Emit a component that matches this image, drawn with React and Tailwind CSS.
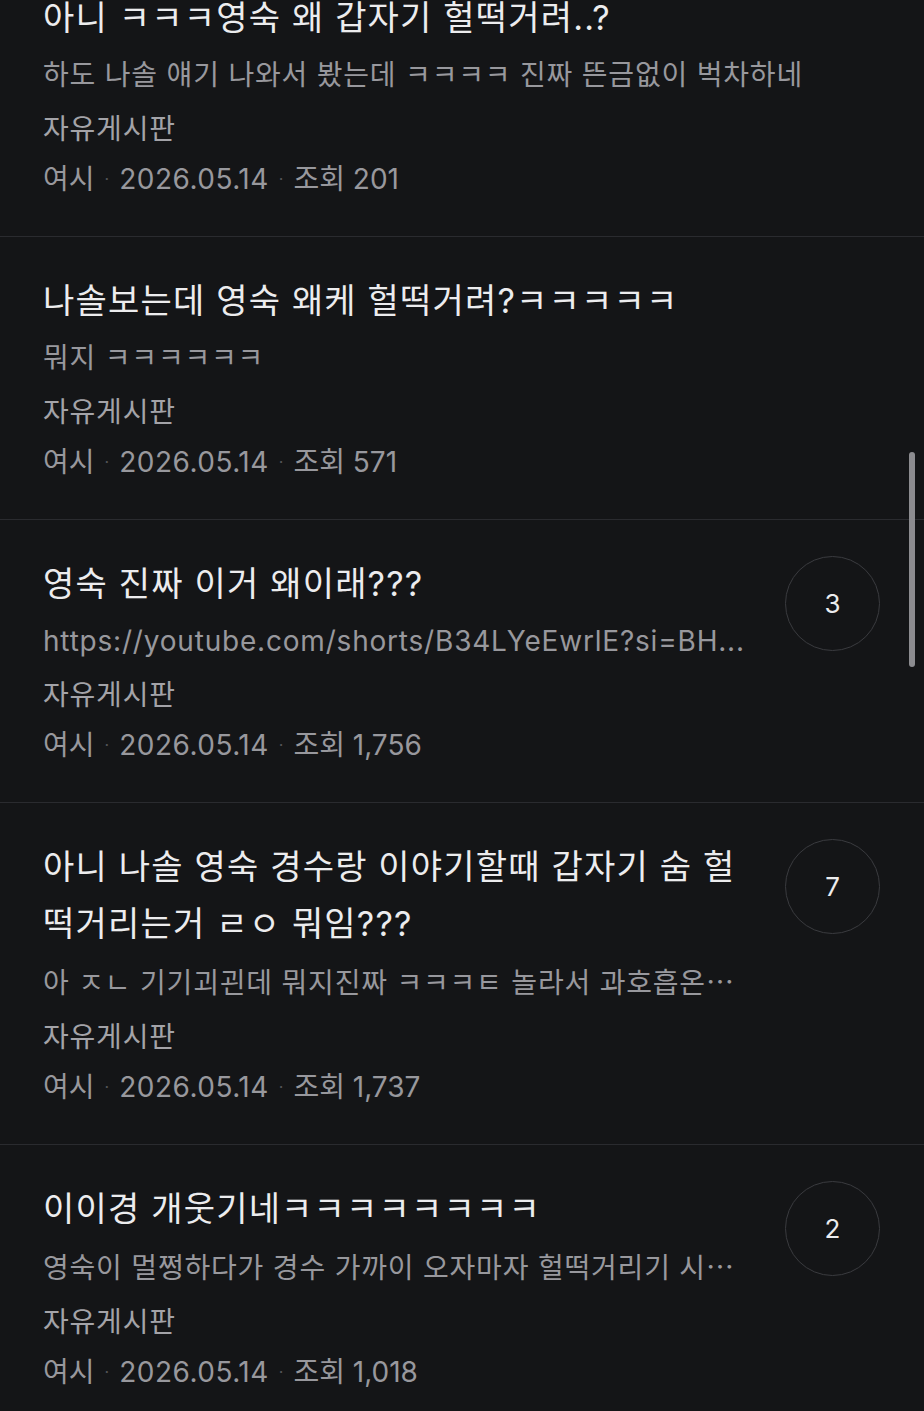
import React from "react";

const posts = [
  {
    id: 1,
    title: "아니 ㅋㅋㅋ영숙 왜 갑자기 헐떡거려..?",
    summary: "하도 나솔 얘기 나와서 봤는데 ㅋㅋㅋㅋ 진짜 뜬금없이 벅차하네",
    views: "201",
    comments: null,
  },
  {
    id: 2,
    title: "나솔보는데 영숙 왜케 헐떡거려?ㅋㅋㅋㅋㅋ",
    summary: "뭐지 ㅋㅋㅋㅋㅋㅋ",
    views: "571",
    comments: null,
  },
  {
    id: 3,
    title: "영숙 진짜 이거 왜이래???",
    summary: "https://youtube.com/shorts/B34LYeEwrlE?si=BH...",
    views: "1,756",
    comments: 3,
  },
  {
    id: 4,
    title: "아니 나솔 영숙 경수랑 이야기할때 갑자기 숨 헐떡거리는거 ㄹㅇ 뭐임???",
    summary: "아 ㅈㄴ 기기괴괸데 뭐지진짜 ㅋㅋㅋㅌ 놀라서 과호흡온",
    cut: true,
    views: "1,737",
    comments: 7,
  },
  {
    id: 5,
    title: "이이경 개웃기네ㅋㅋㅋㅋㅋㅋㅋㅋ",
    summary: "영숙이 멀쩡하다가 경수 가까이 오자마자 헐떡거리기 시",
    cut: true,
    views: "1,018",
    comments: 2,
  },
];

function PostRow({ post }) {
  return (
    <li className="flex items-start border-b border-[#2a2b2f] pl-[43px] pr-[44px] pt-[35px] pb-[32px]">
      <div className="min-w-0 flex-1">
        <h3 className="text-[34px] leading-[57px] text-[#ececee] tracking-[1.2px]">
          {post.title}
        </h3>
        <p className="mt-[4px] truncate text-[28px] leading-[50px] text-[#98989d] tracking-[0.8px]">
          {post.summary}
          {post.cut && (
            <span style={{ fontFamily: '"Noto Sans CJK KR", sans-serif' }}>…</span>
          )}
        </p>
        <p className="mt-[4px] text-[28px] leading-[50px] text-[#a3a3a8] tracking-[0.8px]">
          자유게시판
        </p>
        <div className="flex items-center text-[28px] leading-[50px] text-[#98989d]">
          <span>여시</span>
          <span className="mx-[10px] text-[16px] text-[#55555a]">·</span>
          <span className="tracking-[0.5px]">2026.05.14</span>
          <span className="mx-[10px] text-[16px] text-[#55555a]">·</span>
          <span>조회 {post.views}</span>
        </div>
      </div>
      {post.comments !== null && (
        <div className="ml-[32px] mt-[1px] flex h-[95px] w-[95px] shrink-0 items-center justify-center rounded-full border border-[#3a3b3f] text-[26px] text-[#ececee]">
          {post.comments}
        </div>
      )}
    </li>
  );
}

export default function App() {
  return (
    <div
      className="relative h-[1411px] w-[924px] overflow-hidden bg-[#141517]"
      style={{ fontFamily: 'Inter, "Noto Sans CJK KR", sans-serif' }}
    >
      <ul className="mt-[-46px]">
        {posts.map((post) => (
          <PostRow key={post.id} post={post} />
        ))}
      </ul>
      <div className="absolute right-[9px] top-[452px] h-[215px] w-[6px] rounded-full bg-[#8c8c90]" />
    </div>
  );
}
